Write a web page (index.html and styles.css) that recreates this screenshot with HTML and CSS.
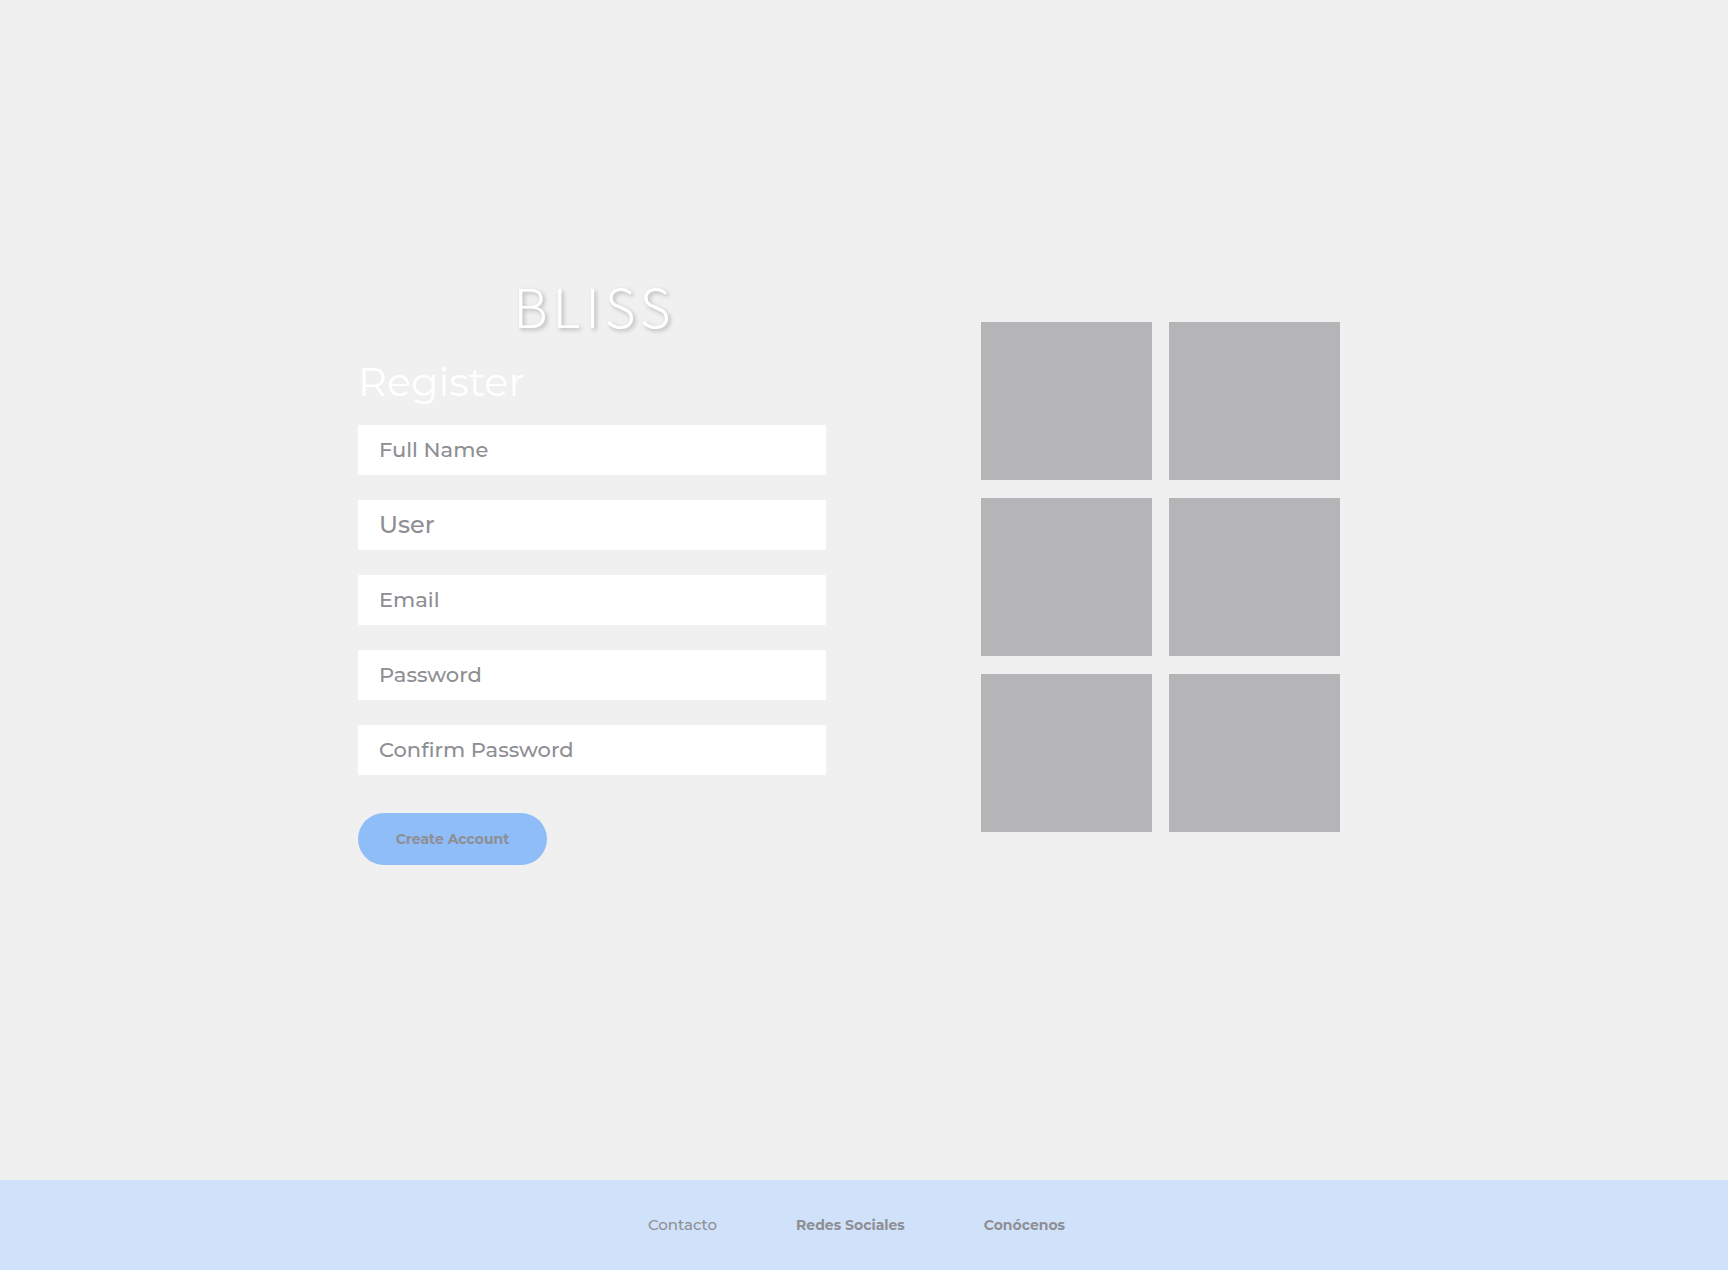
FILE: index.html
```html
<!DOCTYPE html>
<html lang="en">
<head>
  <meta charset="utf-8">
  <meta name="viewport" content="width=device-width, initial-scale=1">
  <title>Bliss – Register</title>
  <link rel="stylesheet" href="styles.css">
</head>
<body>
  <main class="main">
    <section class="register">
      <div class="logo">BLISS</div>
      <h1 class="title">Register</h1>
      <form class="form">
        <div class="field">
          <input class="field-input" id="full-name" type="text" placeholder=" ">
          <label class="field-label" for="full-name">Full Name</label>
        </div>
        <div class="field field-large">
          <input class="field-input" id="user" type="text" placeholder=" ">
          <label class="field-label" for="user">User</label>
        </div>
        <div class="field">
          <input class="field-input" id="email" type="email" placeholder=" ">
          <label class="field-label" for="email">Email</label>
        </div>
        <div class="field">
          <input class="field-input" id="password" type="password" placeholder=" ">
          <label class="field-label" for="password">Password</label>
        </div>
        <div class="field">
          <input class="field-input" id="confirm" type="password" placeholder=" ">
          <label class="field-label" for="confirm">Confirm Password</label>
        </div>
        <button class="submit" type="submit">Create Account</button>
      </form>
    </section>
    <div class="gallery">
      <div class="tile"></div>
      <div class="tile"></div>
      <div class="tile"></div>
      <div class="tile"></div>
      <div class="tile"></div>
      <div class="tile"></div>
    </div>
  </main>
  <footer class="footer">
    <nav class="links">
      <a class="link" href="#contacto">Contacto</a>
      <a class="link link-bold" href="#redes">Redes Sociales</a>
      <a class="link link-bold" href="#conocenos">Conócenos</a>
    </nav>
  </footer>
</body>
</html>
```
FILE: styles.css
```css
* {
  box-sizing: border-box;
}

body {
  margin: 0;
  min-height: 100vh;
  display: flex;
  flex-direction: column;
  background: #f0f0f0;
  color: #8e8e93;
  font-family: Montserrat, Inter, sans-serif;
}

.main {
  flex: 1;
  display: flex;
  justify-content: center;
  align-items: center;
  gap: 155px;
  padding: 0 30px 26px 0;
}

.register {
  flex: 0 1 468px;
}

.logo {
  padding-left: 5px;
  color: #fff;
  font-family: "Noto Sans CJK JP", "Open Sans", sans-serif;
  font-size: 53px;
  font-weight: 300;
  line-height: 32px;
  letter-spacing: 5px;
  text-align: center;
  text-shadow: 2px 2px 4px rgba(0, 0, 0, 0.25);
}

.title {
  margin: 37px 0 19px;
  color: #fff;
  font-size: 40px;
  font-weight: 400;
  line-height: 48px;
}

.form {
  display: flex;
  flex-direction: column;
  gap: 25px;
}

/* The label shares the input's grid cell and hides once text is typed. */
.field {
  display: grid;
  align-items: center;
  font-size: 21px;
  font-weight: 500;
}

.field-large {
  font-size: 24px;
}

.field-input,
.field-label {
  grid-area: 1 / 1;
}

.field-input {
  width: 100%;
  height: 50px;
  padding: 0 21px;
  border: 0;
  border-radius: 0;
  background: #fff;
  color: #8e8e93;
  font: inherit;
}

.field-label {
  justify-self: start;
  padding: 0 21px;
  line-height: 28px;
  pointer-events: none;
}

.field-input:not(:placeholder-shown) + .field-label {
  visibility: hidden;
}

.submit {
  align-self: flex-start;
  width: 189px;
  height: 52px;
  margin-top: 13px;
  padding: 0;
  border: 0;
  border-radius: 26px;
  background: #8ebdf8;
  color: #8e8e93;
  font-family: inherit;
  font-size: 14px;
  font-weight: 700;
}

.gallery {
  display: grid;
  grid-template-columns: repeat(2, 171px);
  gap: 18px 17px;
}

.tile {
  height: 158px;
  background: #b5b5b7;
}

.footer {
  height: 90px;
  display: flex;
  align-items: center;
  justify-content: center;
  padding-right: 15px;
  background: #d0e2fa;
}

.links {
  display: flex;
  gap: 79px;
}

.link {
  color: #8e8e93;
  font-size: 15px;
  font-weight: 500;
  line-height: 20px;
  text-decoration: none;
}

.link-bold {
  font-size: 14px;
  font-weight: 700;
}
```
